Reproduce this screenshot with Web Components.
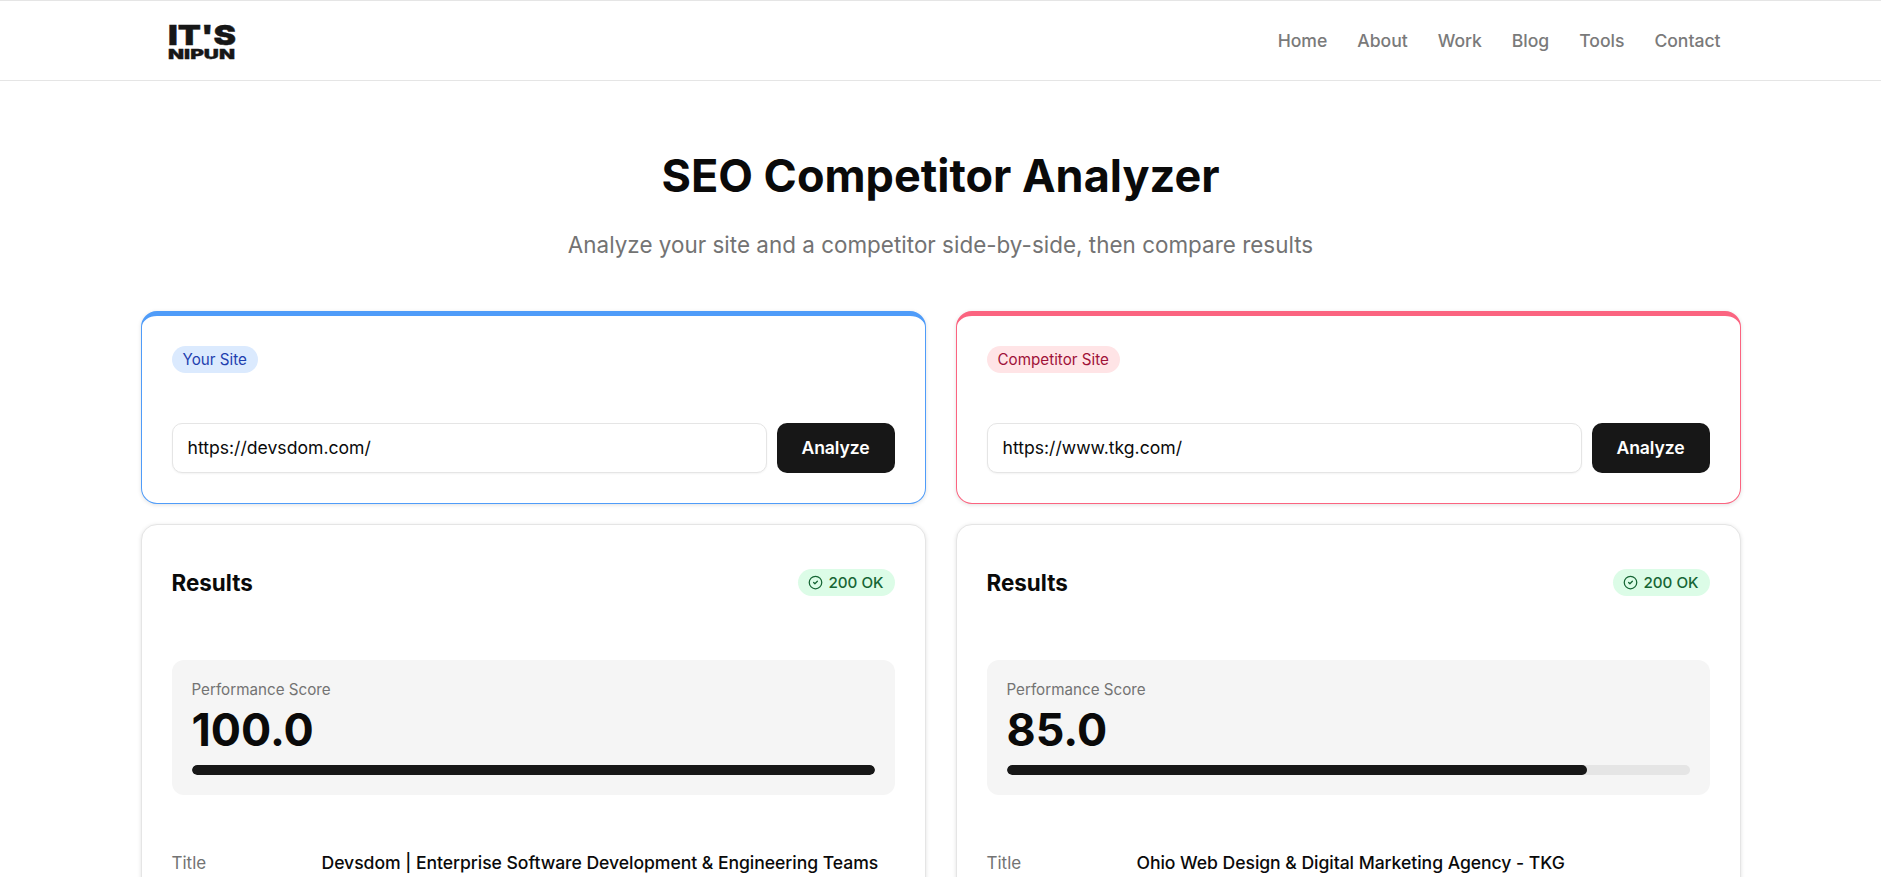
<!DOCTYPE html>
<html lang="en">
<head>
<meta charset="utf-8">
<title>SEO Competitor Analyzer</title>
<style>
  html, body { margin: 0; background: #fff; height: 877px; overflow: hidden; }
  body { font-family: Inter, sans-serif; color: #0a0a0a; }
</style>
</head>
<body>
<site-nav></site-nav>
<analyzer-page>
  <site-card slot="left" accent="#4f9cf9" label="Your Site" badge-bg="#dbeafe" badge-fg="#1e40af" url="https://devsdom.com/"></site-card>
  <site-card slot="right" accent="#fb6480" label="Competitor Site" badge-bg="#ffe4e6" badge-fg="#9f1239" url="https://www.tkg.com/"></site-card>
  <results-card slot="left" score="100.0" title-text="Devsdom | Enterprise Software Development &amp; Engineering Teams"></results-card>
  <results-card slot="right" score="85.0" title-text="Ohio Web Design &amp; Digital Marketing Agency - TKG"></results-card>
</analyzer-page>

<script>
class SiteNav extends HTMLElement {
  constructor() {
    super();
    this.attachShadow({ mode: 'open' });
    const links = ['Home', 'About', 'Work', 'Blog', 'Tools', 'Contact'];
    this.shadowRoot.innerHTML = `
      <style>
        :host { display: block; height: 81px; box-sizing: border-box; border-top: 1px solid #e5e5e5; border-bottom: 1px solid #e5e5e5; background: #fff; }
        nav { width: 1600px; margin: 0 auto; height: 100%; display: flex; align-items: center; justify-content: space-between; padding: 0 20px 0 27px; box-sizing: border-box; }
        svg { display: block; overflow: visible; }
        ul { display: flex; gap: 30px; list-style: none; margin: 0; padding: 0; }
        a { font-size: 17.6px; font-weight: 500; letter-spacing: -.03px; color: #7a7a7a; text-decoration: none; }
      </style>
      <nav>
        <svg width="68" height="44" viewBox="0 0 68 44">
          <text x="0" y="26" font-family="Inter, sans-serif" font-weight="900" font-size="27.5" textLength="68" lengthAdjust="spacingAndGlyphs" fill="#171717" stroke="#171717" stroke-width=".4">IT'S</text>
          <text x="0" y="40" font-family="Inter, sans-serif" font-weight="900" font-size="13.5" textLength="67" lengthAdjust="spacingAndGlyphs" fill="#171717" stroke="#171717" stroke-width=".3">NIPUN</text>
        </svg>
        <ul>${links.map(l => `<li><a href="#">${l}</a></li>`).join('')}</ul>
      </nav>`;
  }
}
customElements.define('site-nav', SiteNav);

class AnalyzerPage extends HTMLElement {
  constructor() {
    super();
    this.attachShadow({ mode: 'open' });
    this.shadowRoot.innerHTML = `
      <style>
        :host { display: block; }
        main { width: 1600px; margin: 0 auto; }
        header { text-align: center; padding-top: 68px; margin-bottom: 51px; }
        h1 { margin: 0; font-size: 45px; line-height: 54px; font-weight: 700; }
        p { margin: 27px 0 0; font-size: 22.4px; line-height: 30px; color: #737373; letter-spacing: .03px; }
        .cols { display: grid; grid-template-columns: 785px 785px; gap: 30px; }
        .col { display: flex; flex-direction: column; gap: 20px; min-width: 0; }
        ::slotted(*) { flex: none; }
      </style>
      <main>
        <header>
          <h1>SEO Competitor Analyzer</h1>
          <p>Analyze your site and a competitor side-by-side, then compare results</p>
        </header>
        <div class="cols">
          <div class="col"><slot name="left"></slot></div>
          <div class="col"><slot name="right"></slot></div>
        </div>
      </main>`;
  }
}
customElements.define('analyzer-page', AnalyzerPage);

class SiteCard extends HTMLElement {
  constructor() {
    super();
    this.attachShadow({ mode: 'open' });
  }
  connectedCallback() {
    const accent = this.getAttribute('accent');
    this.shadowRoot.innerHTML = `
      <style>
        :host { display: block; box-sizing: border-box; border: 1px solid ${accent}; border-top: 5px solid ${accent}; border-radius: 16px; background: #fff; padding: 30px; box-shadow: 0 1px 4px rgba(0,0,0,.12); }
        .badge { display: block; width: fit-content; font-size: 15.2px; line-height: 17px; padding: 5px 11px; border-radius: 999px; background: ${this.getAttribute('badge-bg')}; color: ${this.getAttribute('badge-fg')}; }
        .row { display: flex; gap: 10px; margin-top: 50px; }
        input { flex: 1; min-width: 0; height: 50px; box-sizing: border-box; border: 1px solid #e5e5e5; border-radius: 10px; padding: 0 15px 1px; font: 400 17.6px Inter, sans-serif; color: #0a0a0a; background: #fff; box-shadow: 0 1px 2px rgba(0,0,0,.05); outline: none; }
        button { width: 118px; height: 50px; border: 0; border-radius: 10px; background: #171717; color: #fff; font: 600 17.6px Inter, sans-serif; letter-spacing: -.1px; padding: 0 0 1px; }
      </style>
      <span class="badge">${this.getAttribute('label')}</span>
      <div class="row">
        <input type="text" value="${this.getAttribute('url')}">
        <button type="button">Analyze</button>
      </div>`;
  }
}
customElements.define('site-card', SiteCard);

class ResultsCard extends HTMLElement {
  constructor() {
    super();
    this.attachShadow({ mode: 'open' });
  }
  connectedCallback() {
    const score = this.getAttribute('score');
    const title = this.getAttribute('title-text').replace(/&/g, '&amp;');
    this.shadowRoot.innerHTML = `
      <style>
        :host { display: block; box-sizing: border-box; height: 500px; border: 1px solid #e5e5e5; border-radius: 16px; background: #fff; padding: 36px 30px 30px; box-shadow: 0 1px 4px rgba(0,0,0,.12); }
        .head { display: flex; align-items: center; justify-content: space-between; height: 44px; }
        h2 { margin: 0; font-size: 22.4px; font-weight: 700; line-height: 28px; }
        .ok { display: inline-flex; align-items: center; gap: 5px; height: 27px; padding: 0 11px 0 10px; margin-top: -1px; border-radius: 999px; background: #dcfce7; color: #166534; font-size: 15.2px; font-weight: 500; }
        .ok svg { display: block; }
        .score { margin-top: 55px; background: #f5f5f5; border-radius: 12px; padding: 20px; height: 135px; box-sizing: border-box; }
        .lbl { font-size: 15.2px; line-height: 20px; color: #737373; }
        .val { font-size: 44.8px; font-weight: 700; line-height: 52px; margin-top: 4px; }
        .track { height: 10px; border-radius: 5px; background: #e5e5e5; margin-top: 9px; overflow: hidden; }
        .fill { height: 100%; width: ${parseFloat(score)}%; border-radius: 5px; background: #171717; }
        dl { display: grid; grid-template-columns: 150px 1fr; margin: 56px 0 0; font-size: 17.6px; line-height: 24px; }
        dt { color: #737373; font-size: 17px; }
        dd { margin: 0; font-weight: 500; letter-spacing: -.05px; }
      </style>
      <div class="head">
        <h2>Results</h2>
        <span class="ok">
          <svg width="15" height="15" viewBox="0 0 24 24" fill="none" stroke="currentColor" stroke-width="2" stroke-linecap="round" stroke-linejoin="round"><circle cx="12" cy="12" r="10"/><path d="m9 12 2 2 4-4"/></svg>
          200 OK
        </span>
      </div>
      <div class="score">
        <div class="lbl">Performance Score</div>
        <div class="val">${score}</div>
        <div class="track"><div class="fill"></div></div>
      </div>
      <dl><dt>Title</dt><dd>${title}</dd></dl>`;
  }
}
customElements.define('results-card', ResultsCard);
</script>
</body>
</html>
